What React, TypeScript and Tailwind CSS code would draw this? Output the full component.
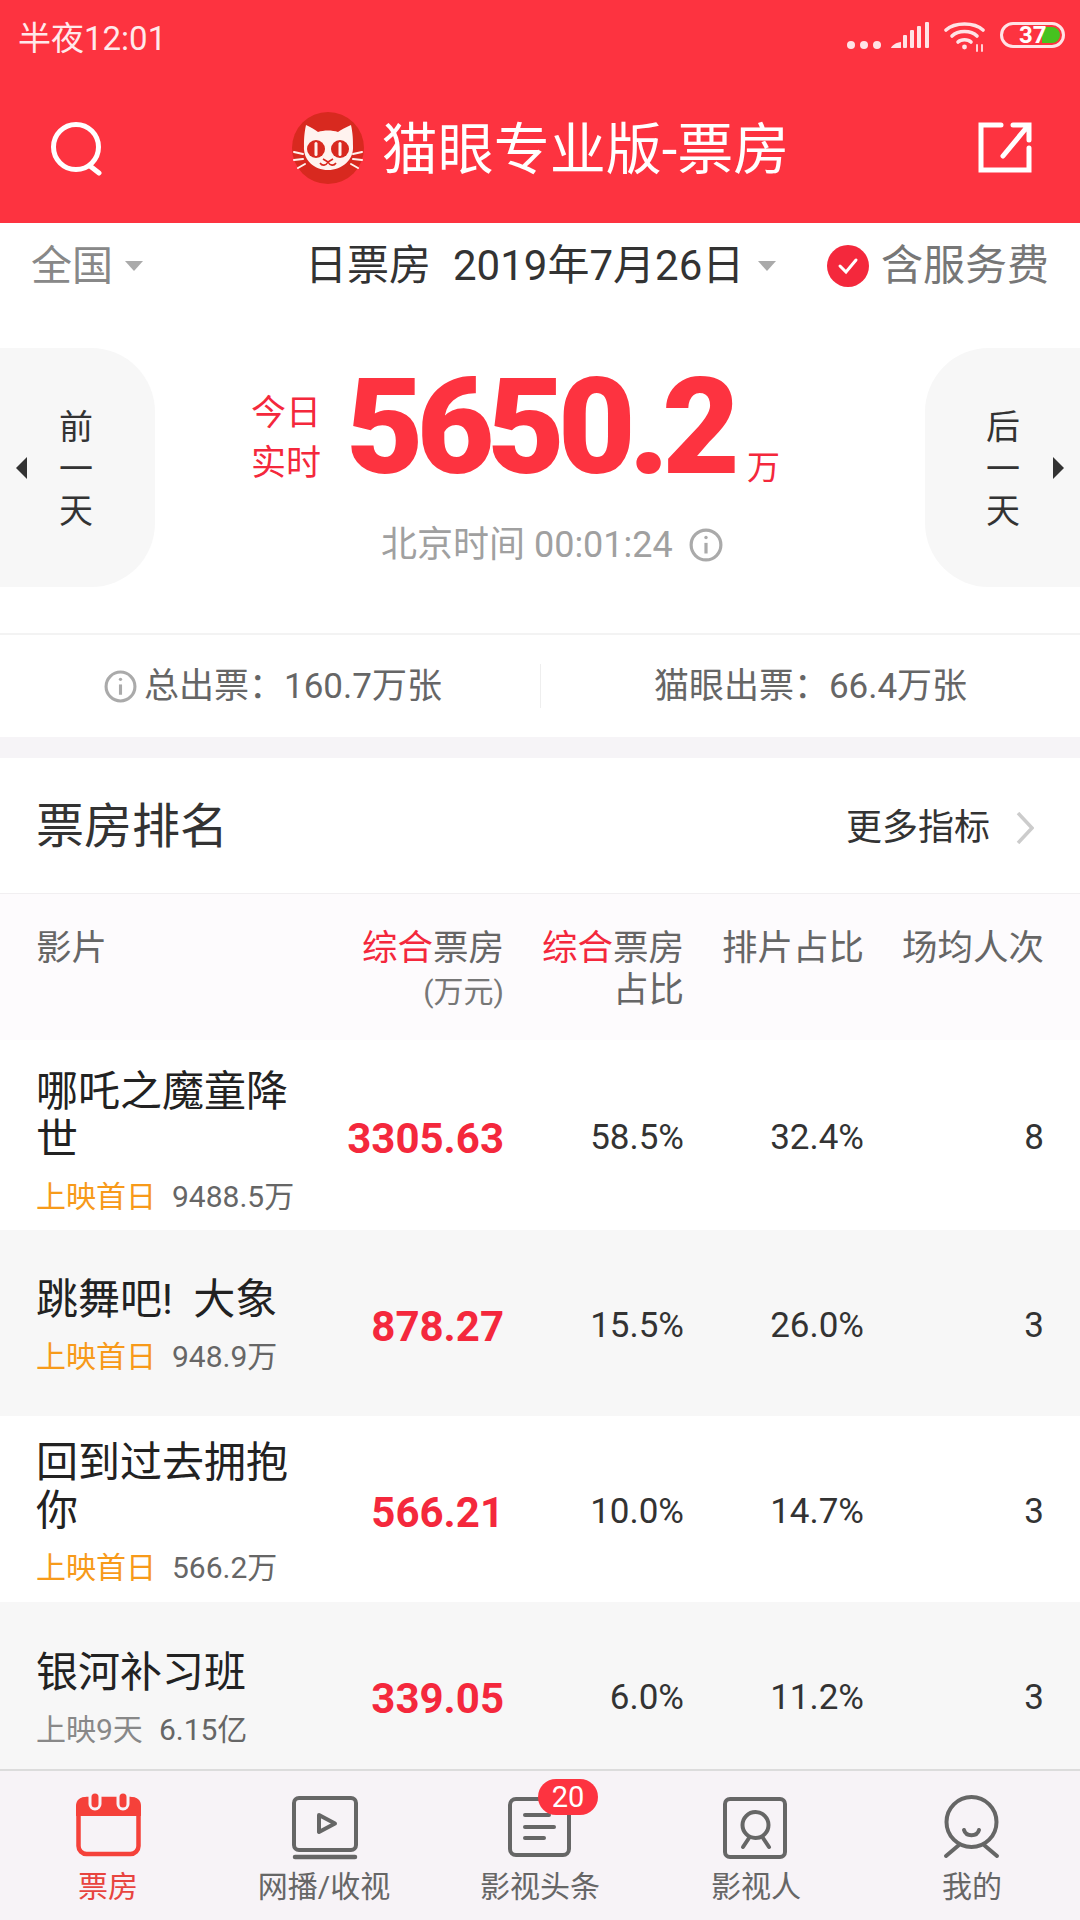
const rows = [
  {
    name: "哪吒之魔童降世",
    tag: "上映首日",
    tagClass: "text-[#f79a1a]",
    total: "9488.5万",
    box: "3305.63",
    share: "58.5%",
    seat: "32.4%",
    avg: "8",
    rowClass: "h-[190px] bg-white",
    nameClass: "pt-[28px]",
  },
  {
    name: "跳舞吧! 大象",
    tag: "上映首日",
    tagClass: "text-[#f79a1a]",
    total: "948.9万",
    box: "878.27",
    share: "15.5%",
    seat: "26.0%",
    avg: "3",
    rowClass: "h-[186px] bg-[#f7f7f7]",
    nameClass: "pt-[46px]",
  },
  {
    name: "回到过去拥抱你",
    tag: "上映首日",
    tagClass: "text-[#f79a1a]",
    total: "566.2万",
    box: "566.21",
    share: "10.0%",
    seat: "14.7%",
    avg: "3",
    rowClass: "h-[186px] bg-white",
    nameClass: "pt-[23px]",
  },
  {
    name: "银河补习班",
    tag: "上映9天",
    tagClass: "text-[#888888]",
    total: "6.15亿",
    box: "339.05",
    share: "6.0%",
    seat: "11.2%",
    avg: "3",
    rowClass: "h-[186px] bg-[#f7f7f7]",
    nameClass: "pt-[47px]",
  },
];

const InfoIcon = ({ size }: { size: number }) => (
  <svg width={size} height={size} viewBox="0 0 32 32" fill="none" stroke="#aaaaaa" strokeWidth="3">
    <circle cx="16" cy="16" r="14" />
    <line x1="16" y1="14" x2="16" y2="24" />
    <circle cx="16" cy="9" r="1.6" fill="#aaaaaa" stroke="none" />
  </svg>
);

const StatusIcons = () => (
  <div className="mt-[22px] flex items-start self-start pr-[15px]">
    <svg width="84" height="28" viewBox="0 0 84 28" fill="#ffe3e6">
      <circle cx="4" cy="23" r="4" />
      <circle cx="17" cy="23" r="4" />
      <circle cx="30" cy="23" r="4" />
      <path d="M44 26 C44 24 50 20 54 20 V26 Z" />
      <rect x="56" y="13" width="4" height="13" rx="1" />
      <rect x="63" y="8" width="4" height="18" rx="1" />
      <rect x="70" y="4" width="4" height="22" rx="1" />
      <rect x="78" y="0" width="4" height="26" rx="1" />
    </svg>
    <svg className="ml-[13px]" width="42" height="30" viewBox="0 0 42 30" fill="none" stroke="#ffe3e6" strokeWidth="3.6" strokeLinecap="round">
      <path d="M2 8 C11 0 30 0 39 8" />
      <path d="M8 14 C14 8 27 8 33 14" />
      <path d="M14 20 C17 17 24 17 27 20" />
      <circle cx="20.5" cy="25" r="2.4" fill="#ffe3e6" stroke="none" />
      <path d="M33 23 V29 M38 23 V29" strokeWidth="1.8" />
    </svg>
    <div className="relative ml-[14px] flex h-[26px] w-[65px] items-center overflow-hidden rounded-full border-[3px] border-[#ffe3e6]">
      <div className="absolute bottom-[2px] right-[2px] top-[2px] w-[18px] rounded-r-full bg-[#46c21f]" />
      <span className="relative w-full pl-[16px] text-[24px] font-bold leading-none text-white">37</span>
    </div>
  </div>
);

const CatLogo = () => (
  <svg width="72" height="72" viewBox="0 0 72 72">
    <circle cx="36" cy="36" r="36" fill="#d8291f" />
    <path
      d="M14 13 C19 15 23 18 26 20 C32 18 40 18 46 20 C49 18 54 15 59 13 C61 22 61 29 61 34 C62 48 50 58 36 58 C22 58 11 48 12 34 C12 29 12 22 14 13 Z"
      fill="#fff3ef"
    />
    <circle cx="24" cy="37" r="9" fill="#d8291f" />
    <circle cx="48" cy="37" r="9" fill="#d8291f" />
    <rect x="22.5" y="30" width="3" height="14" rx="1.5" fill="#fff3ef" />
    <rect x="46.5" y="30" width="3" height="14" rx="1.5" fill="#fff3ef" />
    <path d="M31 47 L36 50 L41 47 M36 50 C34 54 30 54 28 51 M36 50 C38 54 42 54 44 51" fill="none" stroke="#d8291f" strokeWidth="1.6" />
    <path
      d="M11 42 L2 40 M11 47 L2 48 M13 52 L6 56 M61 42 L70 40 M61 47 L70 48 M59 52 L66 56"
      stroke="#fff3ef"
      strokeWidth="2"
      strokeLinecap="round"
    />
  </svg>
);

const SideButton = ({ side, chars }: { side: "left" | "right"; chars: string[] }) => {
  const isLeft = side === "left";
  return (
    <div
      className={
        isLeft
          ? "flex h-[239px] w-[155px] items-center rounded-r-[64px] bg-[#f7f7f7] pl-[15px]"
          : "flex h-[239px] w-[155px] flex-row-reverse items-center rounded-l-[64px] bg-[#f7f7f7] pr-[15px]"
      }
    >
      <svg width="12" height="22" viewBox="0 0 12 22" fill="#333333">
        {isLeft ? <path d="M12 0 V22 L1 11 Z" /> : <path d="M0 0 V22 L11 11 Z" />}
      </svg>
      <div className={isLeft ? "ml-[32px] flex flex-col pt-[2px]" : "mr-[33px] flex flex-col pt-[2px]"}>
        {chars.map((c) => (
          <span key={c} className="text-[34px] leading-[42px] text-[#333333]">
            {c}
          </span>
        ))}
      </div>
    </div>
  );
};

const Caret = () => (
  <svg width="18" height="10" viewBox="0 0 18 10" fill="#aaaaaa">
    <path d="M0 0 H18 L9 10 Z" />
  </svg>
);

const NavIcon = ({ name }: { name: string }) => {
  if (name === "calendar") {
    return (
      <svg width="80" height="76" viewBox="0 0 80 76" fill="none">
        <rect x="10.5" y="14" width="60" height="55" rx="8" stroke="#f5413a" strokeWidth="4.5" />
        <path d="M8 31 V21 C8 15 12 12 18 12 H63 C69 12 73 15 73 21 V31 Z" fill="#f5413a" />
        <rect x="22" y="7" width="10" height="17" rx="5" fill="#f5413a" stroke="#f7f3f7" strokeWidth="3" />
        <rect x="50" y="7" width="10" height="17" rx="5" fill="#f5413a" stroke="#f7f3f7" strokeWidth="3" />
      </svg>
    );
  }
  if (name === "tv") {
    return (
      <svg width="80" height="76" viewBox="0 0 80 76" fill="none" stroke="#666666" strokeWidth="4" strokeLinecap="round" strokeLinejoin="round">
        <rect x="10" y="13" width="62" height="52" rx="5" />
        <line x1="11" y1="72" x2="71" y2="72" strokeWidth="4.5" />
        <path d="M35 30 L51 38.5 L35 47 Z" />
      </svg>
    );
  }
  if (name === "doc") {
    return (
      <svg width="80" height="76" viewBox="0 0 80 76" fill="none" stroke="#666666" strokeWidth="4" strokeLinecap="round">
        <rect x="10" y="14" width="59" height="56" rx="6" />
        <line x1="25" y1="30" x2="49" y2="30" />
        <line x1="25" y1="42" x2="54" y2="42" />
        <line x1="25" y1="53" x2="44" y2="53" />
      </svg>
    );
  }
  if (name === "person") {
    return (
      <svg width="80" height="76" viewBox="0 0 80 76" fill="none" stroke="#666666" strokeWidth="4" strokeLinecap="round">
        <rect x="9" y="14" width="60" height="58" rx="5" />
        <circle cx="39.5" cy="40" r="13" />
        <line x1="33" y1="53" x2="27" y2="62" />
        <line x1="47" y1="53" x2="53" y2="62" />
      </svg>
    );
  }
  return (
    <svg width="80" height="76" viewBox="0 0 80 76" fill="none" stroke="#666666" strokeWidth="4" strokeLinecap="round">
      <circle cx="39.5" cy="37" r="25" />
      <line x1="27" y1="60" x2="14" y2="71" />
      <line x1="52" y1="60" x2="65" y2="71" />
      <path d="M32 45 C34 52 45 52 47 45" />
    </svg>
  );
};

const navItems = [
  { icon: "calendar", label: "票房", active: true },
  { icon: "tv", label: "网播/收视" },
  { icon: "doc", label: "影视头条", badge: "20" },
  { icon: "person", label: "影视人" },
  { icon: "me", label: "我的" },
];

export default function App() {
  return (
    <div className="flex h-[1920px] w-[1080px] flex-col overflow-hidden bg-white font-['Roboto','Noto_Sans_CJK_SC',sans-serif]">
      {/* red header */}
      <div className="h-[223px] shrink-0 bg-[#fd3340]">
        <div className="flex h-[76px] items-center justify-between pl-[18px]">
          <span className="text-[33px] leading-none text-[#ffe9eb]">半夜12:01</span>
          <StatusIcons />
        </div>
        <div className="flex items-center justify-between pl-[48px] pr-[47px] pt-[36px]">
          <svg width="56" height="56" viewBox="0 0 56 56" fill="none" stroke="#ffffff" strokeWidth="5" strokeLinecap="round">
            <circle cx="28" cy="27" r="22.5" />
            <line x1="42" y1="46" x2="51" y2="53" />
          </svg>
          <div className="flex items-center gap-[18px]">
            <CatLogo />
            <span className="pt-[3px] text-[56px] leading-none text-white">猫眼专业版-票房</span>
          </div>
          <svg width="56" height="56" viewBox="0 0 56 56" fill="none" stroke="#ffffff" strokeWidth="5" strokeLinecap="round">
            <path d="M24 5 H4 V50 H52 V28" />
            <path d="M26 36 L50 7 M36 5 H52 V20" />
          </svg>
        </div>
      </div>

      {/* filter row */}
      <div className="flex h-[82px] shrink-0 items-center pl-[31px] pr-[31px] pt-[4px]">
        <div className="flex w-[274px] items-center gap-[12px]">
          <span className="text-[41px] leading-none text-[#888888]">全国</span>
          <Caret />
        </div>
        <div className="flex items-center">
          <span className="text-[42px] leading-none text-[#333333]">日票房</span>
          <span className="ml-[22px] text-[42px] leading-none text-[#333333]">2019年7月26日</span>
          <div className="ml-[14px]">
            <Caret />
          </div>
        </div>
        <div className="ml-auto flex items-center gap-[12px]">
          <svg width="42" height="42" viewBox="0 0 42 42">
            <circle cx="21" cy="21" r="21" fill="#f4283c" />
            <path d="M13 21 L19 27 L29 15" fill="none" stroke="#ffffff" strokeWidth="3" strokeLinecap="round" />
          </svg>
          <span className="text-[42px] leading-none text-[#777777]">含服务费</span>
        </div>
      </div>

      {/* realtime total */}
      <div className="flex h-[330px] shrink-0 items-start border-b-2 border-[#f3f3f3] pt-[43px]">
        <SideButton side="left" chars={["前", "一", "天"]} />
        <div className="flex-1 -mt-[43px]">
          <div className="flex items-start pl-[96px] pt-[56px]">
            <div className="mt-[36px] flex flex-col gap-[16px] text-[35px] leading-[34px] text-[#f4283c]">
              <span>今日</span>
              <span>实时</span>
            </div>
            <span className="ml-[25px] text-[134px] font-black leading-[134px] tracking-[-7px] text-[#fd3340]">
              5650.2
            </span>
            <span className="ml-[14px] mt-[91px] text-[33px] leading-[32px] text-[#f4283c]">万</span>
          </div>
          <div className="mt-[29px] flex h-[42px] items-center gap-[16px] pl-[226px]">
            <span className="text-[36px] leading-none text-[#a0a0a0]">北京时间 00:01:24</span>
            <InfoIcon size={34} />
          </div>
        </div>
        <SideButton side="right" chars={["后", "一", "天"]} />
      </div>

      {/* tickets */}
      <div className="flex h-[102px] shrink-0 items-center">
        <div className="flex w-[540px] items-center justify-center gap-[7px] pl-[6px]">
          <InfoIcon size={33} />
          <span className="text-[35px] leading-none text-[#666666]">总出票：160.7万张</span>
        </div>
        <div className="h-[44px] w-[1px] bg-[#eeeeee]" />
        <div className="flex flex-1 items-center justify-center">
          <span className="text-[35px] leading-none text-[#666666]">猫眼出票：66.4万张</span>
        </div>
      </div>
      <div className="h-[21px] shrink-0 bg-[#f6f4f7]" />

      {/* ranking heading */}
      <div className="flex h-[136px] shrink-0 items-center justify-between border-b border-[#f1eff1] pl-[36px] pr-[46px] pt-[2px]">
        <span className="text-[48px] leading-none text-[#333333]">票房排名</span>
        <div className="flex items-center gap-[26px] pt-[2px]">
          <span className="text-[36px] leading-none text-[#333333]">更多指标</span>
          <svg width="18" height="32" viewBox="0 0 18 32" fill="none" stroke="#cccccc" strokeWidth="3.5">
            <path d="M2 1 L16 16 L2 31" />
          </svg>
        </div>
      </div>

      {/* table */}
      <div className="min-h-0 flex-1 overflow-hidden">
        <div className="grid h-[146px] grid-cols-[1fr_180px_180px_180px_180px] items-start bg-[#fdfbfd] px-[36px] pt-[33px] text-[35.5px] leading-[42px] text-[#666666]">
          <span>影片</span>
          <div className="text-right">
            <span className="text-[#f4283c]">综合</span>票房
            <br />
            <span className="text-[30px] text-[#777777]">(万元)</span>
          </div>
          <div className="text-right">
            <span className="text-[#f4283c]">综合</span>票房
            <br />
            占比
          </div>
          <div className="text-right">排片占比</div>
          <div className="text-right">场均人次</div>
        </div>
        {rows.map((r) => (
          <div key={r.name} className={`grid grid-cols-[1fr_180px_180px_180px_180px] items-center px-[36px] ${r.rowClass}`}>
            <div className={`self-start ${r.nameClass}`}>
              <div className="w-[256px] text-[42px] leading-[48px] text-[#222222] [word-spacing:10px]">{r.name}</div>
              <div className="mt-[15px] flex whitespace-nowrap text-[30px] leading-[36px]">
                <span className={r.tagClass}>{r.tag}</span>
                <span className="ml-[16px] text-[#666666]">{r.total}</span>
              </div>
            </div>
            <div className="pt-[6px] text-right text-[42px] font-bold text-[#f4283c]">{r.box}</div>
            <div className="pt-[6px] text-right text-[35px] text-[#333333]">{r.share}</div>
            <div className="pt-[6px] text-right text-[35px] text-[#333333]">{r.seat}</div>
            <div className="pt-[6px] text-right text-[35px] text-[#333333]">{r.avg}</div>
          </div>
        ))}
      </div>

      {/* bottom nav */}
      <div className="grid h-[151px] shrink-0 grid-cols-5 border-t-2 border-[#dcdcdc] bg-[#f7f3f7] pt-[14px]">
        {navItems.map((item) => (
          <div key={item.label} className="relative flex flex-col items-center">
            <NavIcon name={item.icon} />
            <span
              className={
                item.active
                  ? "mt-[8px] text-[30px] leading-[36px] text-[#e8443f]"
                  : "mt-[8px] text-[30px] leading-[36px] text-[#666666]"
              }
            >
              {item.label}
            </span>
            {item.badge && (
              <span className="absolute left-[106px] top-[-6px] flex h-[36px] w-[60px] items-center justify-center rounded-full bg-[#fd3340] text-[29px] leading-none text-white">
                {item.badge}
              </span>
            )}
          </div>
        ))}
      </div>
    </div>
  );
}
